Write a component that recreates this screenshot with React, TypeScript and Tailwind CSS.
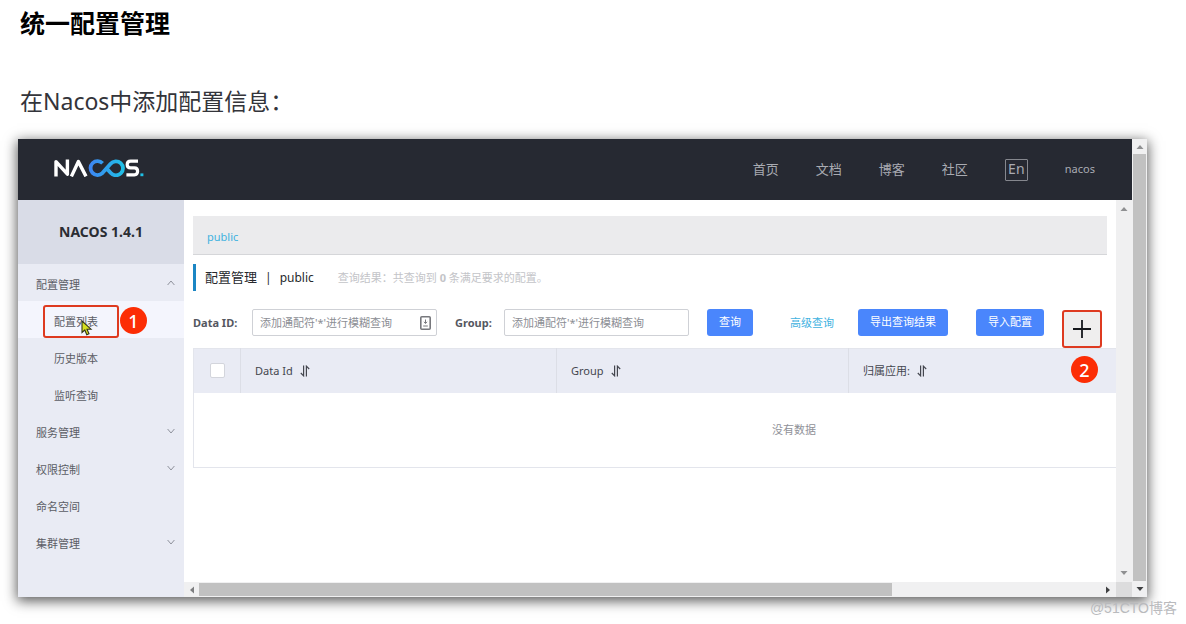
import React from "react";

const CJK = "font-['Noto_Sans','Noto_Sans_CJK_SC',sans-serif]";

const navLinks = ["首页", "文档", "博客", "社区"];

const menu = [
  { label: "配置管理", arrow: "up", children: ["配置列表", "历史版本", "监听查询"] },
  { label: "服务管理", arrow: "down", children: [] },
  { label: "权限控制", arrow: "down", children: [] },
  { label: "命名空间", arrow: "", children: [] },
  { label: "集群管理", arrow: "down", children: [] },
];

function Logo() {
  return (
    <svg viewBox="0 0 90 18" className="h-[18px] w-[90px]" fill="none" role="img" aria-label="Nacos">
      <defs>
        <linearGradient id="logo" x1="34" x2="70" y1="0" y2="0" gradientUnits="userSpaceOnUse">
          <stop offset="0" stopColor="#3f83f3" />
          <stop offset="1" stopColor="#1fc0e6" />
        </linearGradient>
      </defs>
      <path d="M2 17.4V2.6L13.4 15.2V.4" stroke="#fff" strokeWidth="3.4" strokeLinejoin="round" />
      <path d="M17.4 17.4L24.4 2.6L32 17.4" stroke="#fff" strokeWidth="3.4" strokeLinejoin="round" />
      <path
        d="M48.6 4.2A7 7 0 1 0 48.4 14.1L56.6 4.8A7 7 0 1 1 56.8 14L52.6 9.4"
        stroke="url(#logo)"
        strokeWidth="3.8"
        strokeLinejoin="round"
      />
      <path
        d="M84 2.2H76.6C73.8 2.2 73.2 3.8 73.2 5.5S74 8.9 76.6 8.9H80.4C83 8.9 83.6 10.6 83.6 12.3S83 15.8 80.4 15.8H72.4"
        stroke="#fff"
        strokeWidth="3.2"
      />
      <path d="M86.4 14.4h3v2.8h-3z" fill="#1fc0e6" />
    </svg>
  );
}

function Chevron({ up }: { up: boolean }) {
  return (
    <svg viewBox="0 0 8 6" className="h-[6px] w-2" fill="none" stroke="#8f929c" strokeWidth="1" aria-hidden="true">
      <path d={up ? "M.6 5L4 1L7.4 5" : "M.6 1L4 5L7.4 1"} />
    </svg>
  );
}

function SortIcon() {
  return (
    <svg viewBox="0 0 10 12" className="h-3 w-[10px]" fill="none" stroke="#44464e" strokeWidth="1.2" aria-hidden="true">
      <path d="M3.6 .5V10.8L.8 8M6.4 11.5V1.2L9.2 4" />
    </svg>
  );
}

function Badge({ n }: { n: number }) {
  return (
    <span className="flex size-[27px] items-center justify-center rounded-full bg-[#fc2d05] font-['Noto_Sans',sans-serif] text-lg leading-none font-medium text-white">
      {n}
    </span>
  );
}

function Triangle({ d, color }: { d: string; color: string }) {
  return (
    <svg viewBox="0 0 8 8" className="size-2" fill={color} aria-hidden="true">
      <path d={d} />
    </svg>
  );
}

const UP = "M.5 6L4 2L7.5 6z";
const DOWN = "M.5 2L4 6L7.5 2z";
const LEFT = "M6 .5L2 4L6 7.5z";
const RIGHT = "M2 .5L6 4L2 7.5z";

function Header() {
  return (
    <header className="flex h-[61px] items-center bg-[#262932] pr-[37px] pl-9 text-[#a9abb2]">
      <a href="#home" className="-mt-1">
        <Logo />
      </a>
      <nav className="ml-auto flex items-center gap-[37px] text-[13px]">
        {navLinks.map((l) => (
          <a key={l} href="#nav">
            {l}
          </a>
        ))}
        <button type="button" className="flex h-[22px] w-[23px] items-center justify-center rounded-[1px] border border-[#85878e] pb-[2px] text-sm leading-none">
          En
        </button>
        <a href="#user" className="text-[11px]">
          nacos
        </a>
      </nav>
    </header>
  );
}

function Sidebar() {
  return (
    <aside className="w-[166px] shrink-0 bg-[#e9ebf4] text-[11px] text-[#5b5d65]">
      <h2 className="flex h-16 items-center justify-center bg-[#d9dce7] text-sm font-bold text-[#2b2d33]">
        NACOS 1.4.1
      </h2>
      <ul>
        {menu.map((m) => (
          <li key={m.label}>
            <a href="#menu" className="flex h-[37px] items-center justify-between pr-[9px] pl-[18px]">
              <span className="pt-[5px]">{m.label}</span>
              {m.arrow && <Chevron up={m.arrow === "up"} />}
            </a>
            {m.children.length > 0 && (
              <ul>
                {m.children.map((c, i) => (
                  <li key={c} className={i === 0 ? "relative bg-[#f4f5fd]" : ""}>
                    <a href="#item" className="flex h-[37px] items-center pt-[5px] pl-9">
                      {c}
                    </a>
                    {i === 0 && (
                      <>
                        <span className="absolute top-1 left-[25px] h-[33px] w-[76px] rounded-[3px] border-2 border-[#de3a20]" />
                        <span className="absolute top-[6px] left-[102px]">
                          <Badge n={1} />
                        </span>
                        <svg viewBox="0 0 12 16" className="absolute top-[19px] left-[63px] h-4 w-3" aria-hidden="true">
                          <path
                            d="M1 1V12.5L3.8 10L5.8 14.8L8 13.8L6 9.2H10z"
                            fill="#d6e020"
                            stroke="#33361a"
                            strokeWidth="1.1"
                          />
                        </svg>
                      </>
                    )}
                  </li>
                ))}
              </ul>
            )}
          </li>
        ))}
      </ul>
    </aside>
  );
}

const primary = "h-[27px] rounded-[3px] bg-[#4a86fc] text-[11px] text-white";
const field =
  "h-[27px] w-full rounded-[2px] border border-[#cfd1d6] px-[7px] text-[11px] outline-none placeholder:text-[#8c8e94]";

function Filters() {
  return (
    <form className="flex h-[39px] items-start text-[11px]">
      <label htmlFor="dataId" className="w-[59px] shrink-0 leading-[27px] font-bold text-[#55575f]">
        Data ID:
      </label>
      <div className="relative w-[185px] shrink-0">
        <input id="dataId" className={field} placeholder="添加通配符'*'进行模糊查询" />
        <svg viewBox="0 0 11 14" className="absolute top-[7px] right-[6px] h-[14px] w-[11px]" fill="none" aria-hidden="true">
          <rect x=".8" y=".8" width="9.4" height="12.4" rx="1" stroke="#77787d" strokeWidth="1.6" />
          <path d="M5.5 3.5V7M4 5.8L5.5 7.6L7 5.8M3.2 10H7.8" stroke="#77787d" />
        </svg>
      </div>
      <label htmlFor="group" className="ml-[18px] w-[49px] shrink-0 leading-[27px] font-bold text-[#55575f]">
        Group:
      </label>
      <div className="w-[185px] shrink-0">
        <input id="group" className={field} placeholder="添加通配符'*'进行模糊查询" />
      </div>
      <button type="button" className={primary + " ml-[18px] w-[46px] shrink-0"}>
        查询
      </button>
      <a href="#advanced" className="ml-[37px] w-[45px] shrink-0 leading-[27px] text-[#3fb2df]">
        高级查询
      </a>
      <button type="button" className={primary + " ml-[23px] w-[90px] shrink-0"}>
        导出查询结果
      </button>
      <button type="button" className={primary + " ml-7 w-[68px] shrink-0"}>
        导入配置
      </button>
      <div className="relative ml-[18px] shrink-0 self-end">
        <button
          type="button"
          aria-label="新建配置"
          className="flex h-[38px] w-10 items-center justify-center rounded-[3px] border-2 border-[#de3a20] bg-[#efeeee]"
        >
          <svg viewBox="0 0 20 20" className="size-5" stroke="#16181d" strokeWidth="1.8" aria-hidden="true">
            <path d="M10 1V19M1 10H19" />
          </svg>
        </button>
        <span className="absolute top-[46px] left-[9px] z-10">
          <Badge n={2} />
        </span>
      </div>
    </form>
  );
}

function ConfigTable() {
  const th = "border-l border-[#dcdee6] px-[14px] text-left font-normal";
  return (
    <table className="w-full min-w-[1202px] table-fixed border-collapse border border-[#e3e5ec] text-[11px]">
      <thead>
        <tr className="h-11 bg-[#e9ebf4] text-[#44464e]">
          <th className="w-[47px] font-normal">
            <input
              type="checkbox"
              aria-label="全选"
              className="mx-auto block size-[15px] appearance-none rounded-[2px] border border-[#d3d5dc] bg-white"
            />
          </th>
          <th className={th + " w-[316px]"}>
            <span className="flex items-center gap-[7px]">
              Data Id <SortIcon />
            </span>
          </th>
          <th className={th + " w-[292px]"}>
            <span className="flex items-center gap-[7px]">
              Group <SortIcon />
            </span>
          </th>
          <th className={th}>
            <span className="flex items-center gap-[7px]">
              归属应用: <SortIcon />
            </span>
          </th>
        </tr>
      </thead>
      <tbody>
        <tr className="h-[75px]">
          <td colSpan={4} className="text-center text-[#8f9198]">
            没有数据
          </td>
        </tr>
      </tbody>
    </table>
  );
}

function Main() {
  return (
    <main className="min-w-0 flex-1 overflow-hidden pt-4 pl-[9px]">
      <div className="mr-[9px] flex h-[39px] items-center border-b border-[#d5d6d9] bg-[#ebebed] px-[14px] pt-1 text-[11px]">
        <a href="#public" className="text-[#3fb2df]">
          public
        </a>
      </div>
      <div className="mt-[9px] mb-[18px] flex h-[27px] items-center border-l-[3px] border-[#1b86c4] pl-[9px]">
        <h1 className="flex items-center gap-2 text-[13px] text-[#26282d]">
          <span>配置管理</span>
          <span className="text-xs">|</span>
          <span className="text-xs">public</span>
        </h1>
        <p className="ml-6 pt-[2px] text-[11px] text-[#c3c4c8]">
          查询结果：共查询到 <b>0</b> 条满足要求的配置。
        </p>
      </div>
      <Filters />
      <ConfigTable />
    </main>
  );
}

export default function App() {
  return (
    <div className={"bg-white pt-2 " + CJK}>
      <h1 className="pl-5 text-[25px] leading-[30px] font-bold text-black">统一配置管理</h1>
      <p className="mt-12 pl-5 text-[23px] leading-[30px] text-[#33343a]">在Nacos中添加配置信息：</p>
      <section className="mt-[23px] mr-[39px] ml-[18px] flex shadow-[0_3px_12px_1px_rgba(0,0,0,0.65)]">
        <div className="flex min-w-0 flex-1 flex-col bg-white">
          <Header />
          <div className="flex min-h-[397px]">
            <Sidebar />
            <div className="flex min-w-0 flex-1 flex-col">
              <div className="flex flex-1">
                <Main />
                <div className="flex w-4 shrink-0 flex-col items-center justify-between bg-[#f0f0f1] py-[5px]">
                  <Triangle d={UP} color="#8f9092" />
                  <Triangle d={DOWN} color="#8f9092" />
                </div>
              </div>
              <div className="flex h-[15px]">
                <div className="flex flex-1 items-center bg-[#f0f0f1] pr-1 pl-1">
                  <Triangle d={LEFT} color="#7d7e80" />
                  <div className="ml-[3px] h-[13px] w-3/4 bg-[#c1c1c1]" />
                  <div className="ml-auto">
                    <Triangle d={RIGHT} color="#3f4042" />
                  </div>
                </div>
                <div className="w-4 bg-[#dcdcdd]" />
              </div>
            </div>
          </div>
        </div>
        <div className="flex w-[15px] shrink-0 flex-col items-center bg-[#f0f0f1]">
          <div className="flex h-[15px] items-center">
            <Triangle d={UP} color="#8f9092" />
          </div>
          <div className="w-[13px] flex-1 bg-[#c1c1c1]" />
          <div className="flex h-4 items-center">
            <Triangle d={DOWN} color="#3f4042" />
          </div>
        </div>
      </section>
      <footer className="pt-px pr-[9px] text-right font-['Liberation_Sans','Noto_Sans_CJK_SC',sans-serif] text-sm leading-5 text-[#b9babd]">
        @51CTO博客
      </footer>
    </div>
  );
}
